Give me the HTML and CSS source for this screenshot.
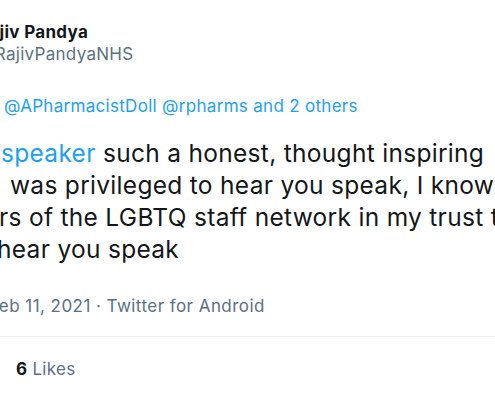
FILE: index.html
```html
<!DOCTYPE html>
<html>
<head>
  <title>Tweet</title>
  <link rel="stylesheet" href="styles.css">
</head>
<body>
  <div class="tweet">
    <div class="author">
      <div class="name">Rajiv Pandya</div>
      <div class="handle">@RajivPandyaNHS</div>
    </div>

    <div class="reply">
      <a href="#">@APharmacistDoll</a> <a href="#">@rpharms</a> <a href="#">and 2 others</a>
    </div>

    <div class="text">
      <span class="line l1"><a href="#">speaker</a> such a honest, thought inspiring</span>
      <span class="line l2">was privileged to hear you speak, I know</span>
      <span class="line l3">rs of the LGBTQ staff network in my trust to</span>
      <span class="line l4">hear you speak</span>
    </div>

    <div class="meta">Feb 11, 2021 · Twitter for Android</div>

    <div class="stats">
      <span class="count">6</span> Likes
    </div>
  </div>
</body>
</html>
```

FILE: styles.css
```css
/* Tweet detail */

body {
  margin: 0;
  padding: 0;
  background-color: #fff;
  font-family: Inter, "Noto Sans", sans-serif;
  color: #14171a;
  overflow: hidden;
}

a {
  color: #1da1f2;
  text-decoration: none;
}

.tweet {
  width: 495px;
  padding-top: 22px;
  letter-spacing: 0.3px;
}

.author {
  margin-left: -22px;
}

.name {
  font-size: 17px;
  line-height: 20px;
  font-weight: 700;
  white-space: nowrap;
}

.handle {
  margin-top: 1px;
  font-size: 17px;
  line-height: 22px;
  color: #5b7083;
  white-space: nowrap;
}

.reply {
  margin-top: 30px;
  padding-left: 4px;
  font-size: 17px;
  line-height: 22px;
  white-space: nowrap;
}

.text {
  margin-top: 20px;
  font-size: 24.5px;
  line-height: 32px;
  letter-spacing: 0.3px;
}

.line {
  display: block;
  white-space: nowrap;
}

.l1 {
  padding-left: 1px;
}

.l2 {
  padding-left: 10px;
}

.l3 {
  margin-left: -1px;
}

.l4 {
  margin-left: -3px;
}

.meta {
  margin-top: 30px;
  margin-left: -11px;
  font-size: 17px;
  line-height: 22px;
  letter-spacing: 0.45px;
  color: #5b7083;
  white-space: nowrap;
}

.stats {
  margin-top: 19px;
  border-top: 1px solid #ebeef0;
  padding: 21px 0 0 16px;
  font-size: 17px;
  line-height: 22px;
  color: #5b7083;
}

.count {
  font-weight: 700;
  color: #14171a;
}
```
